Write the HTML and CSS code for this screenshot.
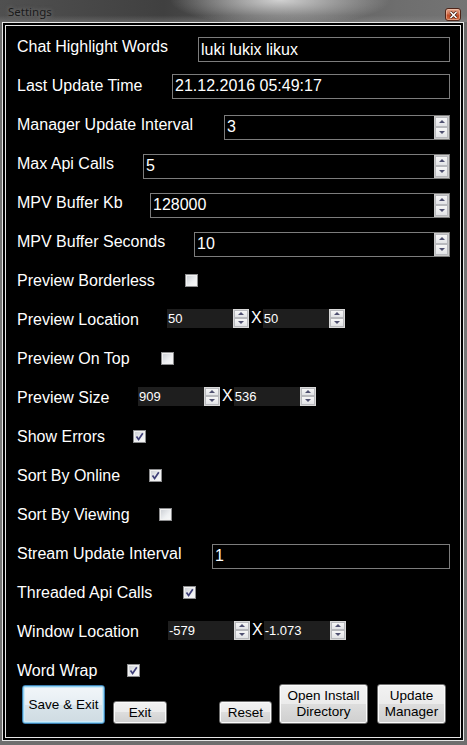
FILE: index.html
```html
<!DOCTYPE html>
<html>
<head>
<meta charset="utf-8">
<title>Settings</title>
<link rel="stylesheet" href="styles.css">
</head>
<body>
<div class="window">
  <div class="titlebar">
    <span class="title">Settings</span>
    <span class="close"><svg width="9" height="8" viewBox="0 0 9 8"><path d="M1.5 1 L7.5 7 M7.5 1 L1.5 7" stroke="#3a1a10" stroke-width="3"/><path d="M1.5 1 L7.5 7 M7.5 1 L1.5 7" stroke="#fff" stroke-width="1.6"/></svg></span>
  </div>
  <div class="frame">
    <div class="panel">
      <div class="row">
        <span class="lbl w181">Chat Highlight Words</span>
        <div class="tb first"><span class="val">luki lukix likux</span></div>
      </div>
      <div class="row">
        <span class="lbl w155">Last Update Time</span>
        <div class="tb flat"><span class="val">21.12.2016 05:49:17</span></div>
      </div>
      <div class="row">
        <span class="lbl w207">Manager Update Interval</span>
        <div class="tb"><span class="val">3</span><span class="spin big"><span class="sb up"></span><span class="sb down"></span></span></div>
      </div>
      <div class="row">
        <span class="lbl w126">Max Api Calls</span>
        <div class="tb"><span class="val">5</span><span class="spin big"><span class="sb up"></span><span class="sb down"></span></span></div>
      </div>
      <div class="row">
        <span class="lbl w133">MPV Buffer Kb</span>
        <div class="tb"><span class="val">128000</span><span class="spin big"><span class="sb up"></span><span class="sb down"></span></span></div>
      </div>
      <div class="row">
        <span class="lbl w177">MPV Buffer Seconds</span>
        <div class="tb"><span class="val">10</span><span class="spin big"><span class="sb up"></span><span class="sb down"></span></span></div>
      </div>
      <div class="row">
        <span class="lbl w168">Preview Borderless</span>
        <span class="cb"></span>
      </div>
      <div class="row">
        <span class="lbl w150">Preview Location</span>
        <div class="sn"><span class="sval">50</span><span class="spin"><span class="sb up"></span><span class="sb down"></span></span></div>
        <span class="x">X</span>
        <div class="sn"><span class="sval">50</span><span class="spin"><span class="sb up"></span><span class="sb down"></span></span></div>
      </div>
      <div class="row">
        <span class="lbl w144">Preview On Top</span>
        <span class="cb"></span>
      </div>
      <div class="row">
        <span class="lbl w121">Preview Size</span>
        <div class="sn"><span class="sval">909</span><span class="spin"><span class="sb up"></span><span class="sb down"></span></span></div>
        <span class="x">X</span>
        <div class="sn"><span class="sval">536</span><span class="spin"><span class="sb up"></span><span class="sb down"></span></span></div>
      </div>
      <div class="row">
        <span class="lbl w116">Show Errors</span>
        <span class="cb"><svg width="11" height="11" viewBox="0 0 11 11"><path d="M2.5 5.5 L4.6 8.4 L8.8 2.2" fill="none" stroke="#3e3f78" stroke-width="1.7"/></svg></span>
      </div>
      <div class="row">
        <span class="lbl w132">Sort By Online</span>
        <span class="cb"><svg width="11" height="11" viewBox="0 0 11 11"><path d="M2.5 5.5 L4.6 8.4 L8.8 2.2" fill="none" stroke="#3e3f78" stroke-width="1.7"/></svg></span>
      </div>
      <div class="row">
        <span class="lbl w142">Sort By Viewing</span>
        <span class="cb"></span>
      </div>
      <div class="row">
        <span class="lbl w195">Stream Update Interval</span>
        <div class="tb"><span class="val">1</span></div>
      </div>
      <div class="row">
        <span class="lbl w166">Threaded Api Calls</span>
        <span class="cb"><svg width="11" height="11" viewBox="0 0 11 11"><path d="M2.5 5.5 L4.6 8.4 L8.8 2.2" fill="none" stroke="#3e3f78" stroke-width="1.7"/></svg></span>
      </div>
      <div class="row">
        <span class="lbl w151">Window Location</span>
        <div class="sn"><span class="sval">-579</span><span class="spin"><span class="sb up"></span><span class="sb down"></span></span></div>
        <span class="x">X</span>
        <div class="sn"><span class="sval">-1.073</span><span class="spin"><span class="sb up"></span><span class="sb down"></span></span></div>
      </div>
      <div class="row">
        <span class="lbl w110">Word Wrap</span>
        <span class="cb"><svg width="11" height="11" viewBox="0 0 11 11"><path d="M2.5 5.5 L4.6 8.4 L8.8 2.2" fill="none" stroke="#3e3f78" stroke-width="1.7"/></svg></span>
      </div>
      <div class="btns">
        <button class="btn default b-save">Save &amp; Exit</button>
        <button class="btn b-exit">Exit</button>
        <button class="btn b-reset">Reset</button>
        <button class="btn b-open">Open Install<br>Directory</button>
        <button class="btn b-update">Update<br>Manager</button>
      </div>
    </div>
  </div>
</div>
</body>
</html>
```

FILE: styles.css
```css
* { box-sizing: border-box; }
html, body { margin: 0; padding: 0; background: #2a2a2a; }

.window {
  width: 467px;
  height: 745px;
  display: flex;
  flex-direction: column;
  background: linear-gradient(to bottom, #6a6a6a, #7a7a7a 60%, #6e6e6e);
  overflow: hidden;
}

.titlebar {
  height: 22px;
  flex: none;
  display: flex;
  align-items: flex-start;
  justify-content: space-between;
  padding: 0 6px 0 8px;
  background:
    radial-gradient(ellipse 110px 26px at 280px 0px, rgba(230,230,230,0.85), rgba(230,230,230,0)),
    linear-gradient(to bottom, rgba(0,0,0,0) 70%, rgba(150,150,150,0.35) 100%),
    linear-gradient(to right, #505050, #404040 35%, #5a5a5a 60%, #6e6e6e 85%, #747474);
}

.title {
  font-family: "Noto Sans", "Open Sans", sans-serif;
  font-size: 11.5px;
  line-height: 16px;
  margin-top: 4px;
  color: #1a1a1a;
  text-shadow: 0 0 4px rgba(200,200,200,0.5);
}

.close {
  width: 16px;
  height: 13px;
  margin-top: 8px;
  border: 1px solid #4e2418;
  border-radius: 3px;
  background: linear-gradient(to bottom, #e4a58c, #d3714f 45%, #c04a25 55%, #d46a40);
  box-shadow: inset 0 0 0 1px rgba(255,220,200,0.45);
  display: flex;
  align-items: center;
  justify-content: center;
}

.frame {
  flex: 1;
  margin: 0 3px 4px 2px;
  border: 1px solid #e6e6e6;
  padding: 2px;
  background: #000;
  display: flex;
}

.panel {
  flex: 1;
  border: 1px solid #e6e6e6;
  background: #000;
  padding-top: 1px;
  display: flex;
  flex-direction: column;
}

.row {
  height: 39px;
  flex: none;
  display: flex;
  align-items: center;
  padding-left: 11px;
}

.lbl {
  flex: none;
  font-family: "Liberation Sans", Arial, sans-serif;
  font-size: 16px;
  color: #fff;
  white-space: nowrap;
}

.w110 { width: 110px; }
.w116 { width: 116px; }
.w121 { width: 121px; }
.w126 { width: 126px; }
.w132 { width: 132px; }
.w133 { width: 133px; }
.w142 { width: 142px; }
.w144 { width: 144px; }
.w150 { width: 150px; }
.w151 { width: 151px; }
.w155 { width: 155px; }
.w166 { width: 166px; }
.w168 { width: 168px; }
.w177 { width: 177px; }
.w181 { width: 181px; }
.w195 { width: 195px; }
.w207 { width: 207px; }

.tb {
  flex: 1;
  height: 25px;
  margin-right: 10px;
  margin-top: 5px;
  border: 1px solid #7c7c7c;
  background: #000;
  display: flex;
  align-items: center;
}
.tb.first { margin-top: 6px; }
.tb.flat { margin-top: 1px; }

.val {
  flex: 1;
  padding-left: 2px;
  font-family: "Liberation Sans", Arial, sans-serif;
  font-size: 16px;
  color: #fff;
  white-space: nowrap;
}

.spin {
  flex: none;
  width: 16px;
  align-self: stretch;
  display: flex;
  flex-direction: column;
  background: #f4f4f4;
  border: 1px solid #d8d8d8;
}
.spin.big {
  width: 15px;
  border-color: #c9c9c9;
}

.sb {
  flex: 1;
  display: flex;
  align-items: center;
  justify-content: center;
  background: linear-gradient(to bottom, #f7f7f7, #e2e3e6);
  border: 1px solid #b8b9bd;
}
.sb.up::before {
  content: "";
  width: 0;
  height: 0;
  border-left: 3px solid transparent;
  border-right: 3px solid transparent;
  border-bottom: 3px solid #4f5070;
}
.sb.down::before {
  content: "";
  width: 0;
  height: 0;
  border-left: 3px solid transparent;
  border-right: 3px solid transparent;
  border-top: 3px solid #4f5070;
}

.sn {
  flex: none;
  width: 82px;
  height: 19px;
  margin-bottom: 3px;
  background: #1e1e1e;
  display: flex;
}
.sval {
  flex: 1;
  padding-left: 1px;
  font-family: "Liberation Sans", Arial, sans-serif;
  font-size: 13px;
  line-height: 19px;
  color: #fff;
  white-space: nowrap;
}

.x {
  flex: none;
  margin: 0 1px 3px 2px;
  font-family: "Liberation Sans", Arial, sans-serif;
  font-size: 16px;
  color: #fff;
}

.cb {
  flex: none;
  width: 13px;
  height: 13px;
  border: 1px solid #8c8d8f;
  background: linear-gradient(135deg, #c9ccd2, #eef0f2 60%, #fafafa);
  box-shadow: inset 0 0 0 1px #f2f2f2;
  display: flex;
  align-items: center;
  justify-content: center;
}

.btns {
  flex: none;
  height: 40px;
  margin-top: -6px;
  padding-left: 16px;
  display: flex;
  align-items: flex-end;
}

.btn {
  flex: none;
  padding: 0;
  font-family: "Liberation Sans", Arial, sans-serif;
  font-size: 13.5px;
  line-height: 16px;
  color: #000;
  border: 1px solid #707070;
  border-radius: 3px;
  background: linear-gradient(to bottom, #f2f2f2 0%, #ebebeb 50%, #dddddd 50%, #cfcfcf 100%);
  box-shadow: inset 0 0 0 1px #fbfbfb;
  text-align: center;
}
.btn.default {
  border-color: #3c7fb1;
  background: linear-gradient(to bottom, #f2f6f9 0%, #e6eef3 50%, #d9e4ea 50%, #cfdbe2 100%);
  box-shadow: inset 0 0 0 1px #8ed0f0, inset 0 0 0 2px #cde9f7;
}

.b-save { width: 83px; height: 39px; }
.b-exit { width: 54px; height: 23px; margin-left: 8px; }
.b-reset { width: 53px; height: 23px; margin-left: 52px; }
.b-open { width: 89px; height: 40px; margin-left: 7px; }
.b-update { width: 69px; height: 40px; margin-left: 9px; }
```
